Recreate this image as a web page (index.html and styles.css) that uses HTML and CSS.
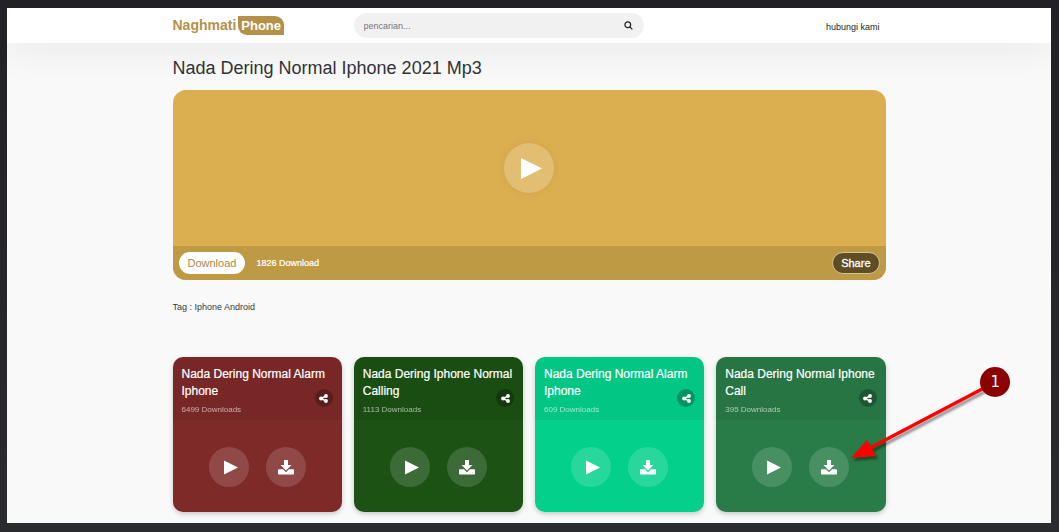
FILE: index.html
```html
<!DOCTYPE html>
<html lang="id">
<head>
<meta charset="utf-8">
<meta name="viewport" content="width=device-width, initial-scale=1">
<title>Nada Dering Normal Iphone 2021 Mp3</title>
<link rel="stylesheet" href="styles.css">
</head>
<body>
<svg class="sprite" aria-hidden="true">
  <symbol id="play" viewBox="0 0 20 20"><path d="M0 0L20 10L0 20z"/></symbol>
  <symbol id="download" viewBox="0 0 16 15"><path d="M6 0h4v5h3.500L8 10.500L2.500 5H6zM.7 9.300H5l3 3l3-3h4.300q.7 0 .7.700v3.800q0 .7-.7.7H.7q-.7 0-.7-.7V10q0-.7.7-.7z"/><path d="M10.500 12.500h1v1h-1zM13 12.500h1v1h-1z" fill="#000" fill-opacity=".2"/></symbol>
  <symbol id="share" viewBox="0 0 12 12"><path d="M9.500 2.700L2.700 6L9.500 9.300" fill="none" stroke="currentColor" stroke-width="2"/><circle cx="9.300" cy="2.700" r="2.600"/><circle cx="2.700" cy="6" r="2.600"/><circle cx="9.300" cy="9.300" r="2.600"/></symbol>
</svg>
<div class="page">
  <header class="topbar">
    <div class="container topbar-row">
      <a class="logo" href="#">Naghmati <span class="logo-tag">Phone</span></a>
      <form class="search">
        <input class="search-input" type="text" placeholder="pencarian..." aria-label="pencarian">
        <button class="search-button" type="button" aria-label="Cari">
          <svg class="search-icon" viewBox="0 0 10 10"><circle cx="4.200" cy="4.200" r="3.200"/><path d="M6.500 6.500L9.300 9.300"/></svg>
        </button>
      </form>
      <a class="contact" href="#">hubungi kami</a>
    </div>
  </header>
  <main class="container main">
    <h1 class="title">Nada Dering Normal Iphone 2021 Mp3</h1>
    <section class="player">
      <div class="player-stage">
        <button class="round round-large" type="button" aria-label="Play"><svg class="icon-play-large"><use href="#play"/></svg></button>
      </div>
      <div class="player-bar">
        <button class="pill" type="button">Download</button>
        <span class="count">1826 Download</span>
        <button class="pill pill-dark" type="button">Share</button>
      </div>
    </section>
    <p class="tags">Tag : <a href="#">Iphone Android</a></p>
    <section class="cards">
      <article class="card card-red">
        <div class="card-head">
          <h2 class="card-title">Nada Dering Normal Alarm Iphone</h2>
          <p class="card-count">6499 Downloads</p>
          <button class="share" type="button" aria-label="Share"><svg class="icon-share"><use href="#share"/></svg></button>
        </div>
        <div class="card-actions">
          <button class="round" type="button" aria-label="Play"><svg class="icon-play"><use href="#play"/></svg></button>
          <button class="round" type="button" aria-label="Download"><svg class="icon-download"><use href="#download"/></svg></button>
        </div>
      </article>
      <article class="card card-forest">
        <div class="card-head">
          <h2 class="card-title">Nada Dering Iphone Normal Calling</h2>
          <p class="card-count">1113 Downloads</p>
          <button class="share" type="button" aria-label="Share"><svg class="icon-share"><use href="#share"/></svg></button>
        </div>
        <div class="card-actions">
          <button class="round" type="button" aria-label="Play"><svg class="icon-play"><use href="#play"/></svg></button>
          <button class="round" type="button" aria-label="Download"><svg class="icon-download"><use href="#download"/></svg></button>
        </div>
      </article>
      <article class="card card-mint">
        <div class="card-head">
          <h2 class="card-title">Nada Dering Normal Alarm Iphone</h2>
          <p class="card-count">609 Downloads</p>
          <button class="share" type="button" aria-label="Share"><svg class="icon-share"><use href="#share"/></svg></button>
        </div>
        <div class="card-actions">
          <button class="round" type="button" aria-label="Play"><svg class="icon-play"><use href="#play"/></svg></button>
          <button class="round" type="button" aria-label="Download"><svg class="icon-download"><use href="#download"/></svg></button>
        </div>
      </article>
      <article class="card card-green">
        <div class="card-head">
          <h2 class="card-title">Nada Dering Normal Iphone Call</h2>
          <p class="card-count">395 Downloads</p>
          <button class="share" type="button" aria-label="Share"><svg class="icon-share"><use href="#share"/></svg></button>
        </div>
        <div class="card-actions">
          <button class="round" type="button" aria-label="Play"><svg class="icon-play"><use href="#play"/></svg></button>
          <button class="round" type="button" aria-label="Download"><svg class="icon-download"><use href="#download"/></svg></button>
        </div>
        <div class="callout">
          <svg class="callout-arrow" viewBox="0 0 170 120"><path d="M138 31L24 91" stroke="#f00" stroke-width="3.500"/><path d="M5 101L21 83L30 99z" fill="#f00"/></svg>
          <span class="callout-badge">1</span>
        </div>
      </article>
    </section>
  </main>
</div>
</body>
</html>
```
FILE: styles.css
```css
* { box-sizing: border-box; }

body {
  margin: 0;
  min-height: 100vh;
  padding: 8px 8px 9px 7px;
  display: flex;
  background: linear-gradient(#222126, #2a2b2f);
  font: 9px/12px "Liberation Sans", Arial, sans-serif;
  color: #343a40;
}

a { color: inherit; text-decoration: none; }
h1, h2, p { margin: 0; font-weight: 400; }
button { border: 0; padding: 0; font-family: inherit; cursor: pointer; }
svg { display: block; fill: currentColor; }
.sprite { position: absolute; width: 0; height: 0; }

.page { flex: 1; background: #f9f9f9; overflow: hidden; }
.container { width: 100%; max-width: 713px; margin: 0 auto; }

.topbar { background: #fff; box-shadow: 0 8px 40px rgba(0, 0, 0, .07); }
.topbar-row {
  display: grid;
  grid-template-columns: 181px 290px 1fr;
  align-items: center;
  padding: 2px 0 3px;
}
.logo {
  display: flex;
  align-items: center;
  gap: 2px;
  color: #b59148;
  font-size: 14px;
  line-height: 18px;
  font-weight: 700;
}
.logo-tag {
  padding: 0 3px;
  border-radius: 0 9px 0 9px;
  background: #b59148;
  color: #fff;
  font-size: 13px;
  line-height: 19px;
}
.search {
  display: flex;
  align-items: center;
  margin: 3px 0 2px;
  padding: 0 11px 0 10px;
  border-radius: 13px;
  background: #f1f1f1;
}
.search-input {
  flex: 1;
  min-width: 0;
  height: 25px;
  padding: 0;
  border: 0;
  outline: 0;
  background: none;
  font: inherit;
}
.search-input::placeholder { color: #757575; }
.search-button { background: none; color: #222; }
.search-icon { width: 9px; height: 9px; fill: none; stroke: currentColor; stroke-width: 1.4; }
.contact { justify-self: end; padding: 3px 6px 0 0; color: #212529; }

.main { padding-bottom: 11px; }
.title {
  padding: 14px 0 11px;
  font-size: 18px;
  line-height: 22px;
  color: #303236;
}

.player { border-radius: 13px; overflow: hidden; background: #dbae4f; color: #fff; }
.player-stage { display: flex; justify-content: center; padding: 53px 0; }
.player-bar {
  display: flex;
  align-items: center;
  padding: 6px;
  background: #bf9a45;
}
.pill {
  height: 22px;
  padding: 0 9px;
  border-radius: 11px;
  background: #fff;
  color: #a9884a;
  font-size: 11px;
}
.pill-dark {
  margin-left: auto;
  padding: 0 8px;
  border: 1px solid #d3c19a;
  background: #5f4d25;
  color: #fff;
  -webkit-text-stroke: 0.3px #fff;
}
.count { margin-left: 11px; -webkit-text-stroke: 0.2px #fff; }
.tags { padding: 21px 0 44px; }

.round {
  display: flex;
  align-items: center;
  justify-content: center;
  width: 40px;
  height: 40px;
  border-radius: 50%;
  background: rgba(255, 255, 255, .15);
  color: #fff;
}
.round-large {
  width: 50px;
  height: 50px;
  background: rgba(255, 255, 255, .2);
  box-shadow: 0 0 10px rgba(0, 0, 0, .05);
}
.icon-play-large { width: 21px; height: 23px; margin-left: 4px; }
.icon-play { width: 14px; height: 15px; margin-left: 4px; }
.icon-download { width: 16px; height: 15px; }
.icon-play-large, .icon-play { overflow: visible; }

.cards { display: grid; grid-template-columns: repeat(4, 1fr); gap: 12px; }
.card {
  position: relative;
  border-radius: 10px;
  box-shadow: 0 2px 5px rgba(0, 0, 0, .2);
  color: #fff;
}
.card-red { background: #7e2a29; }
.card-forest { background: #1c5214; }
.card-mint { background: #03d18b; }
.card-green { background: #297c47; }
.card-head {
  position: relative;
  padding: 9px 9px 5px;
  border-radius: 10px 10px 0 0;
  background: rgba(0, 0, 0, .05);
}
.card-title { font-size: 12px; line-height: 17px; -webkit-text-stroke: 0.2px #fff; }
.card-count { padding-top: 4px; font-size: 8px; line-height: 11px; opacity: .6; }
.share {
  position: absolute;
  right: 9px;
  bottom: 13px;
  display: flex;
  align-items: center;
  justify-content: center;
  width: 18px;
  height: 18px;
  border-radius: 50%;
  background: rgba(0, 0, 0, .25);
  color: #fff;
}
.icon-share { width: 9px; height: 9px; }
.card-actions { display: flex; justify-content: center; gap: 17px; padding: 27px 0 25px; }

.callout { position: absolute; left: 130px; top: 0; width: 170px; height: 120px; pointer-events: none; }
.callout-arrow { width: 170px; height: 120px; filter: drop-shadow(2px 3px 1px rgba(0, 0, 0, .4)); }
.callout-badge {
  position: absolute;
  left: 134px;
  top: 10px;
  width: 30px;
  height: 30px;
  border-radius: 50%;
  background: #8b0000;
  font: 15px/30px "DejaVu Sans", sans-serif;
  text-align: center;
}
```
